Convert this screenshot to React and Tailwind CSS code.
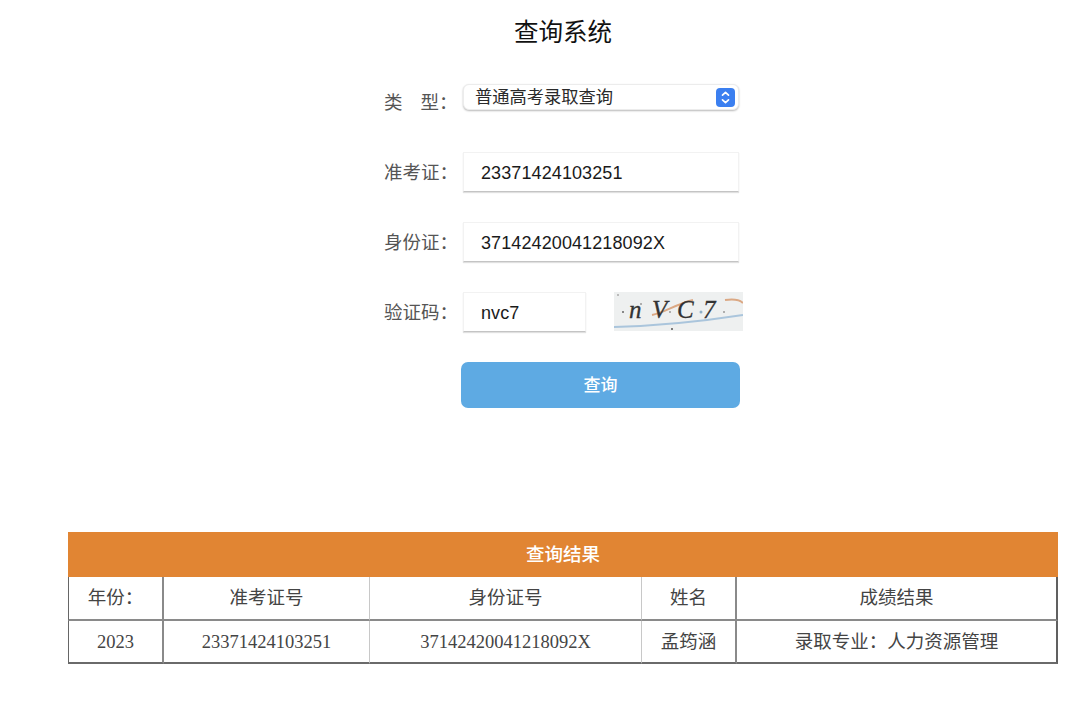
import React from 'react';

const serif = { fontFamily: '"Liberation Serif", "Noto Sans CJK SC", serif' };
const COLON = '\uFF1A';

const FormRow = ({ label, value, narrow, children }) => (
  <div className="flex items-center h-[40px] mb-[30px]">
    <label className="w-[79px] pt-[3px] text-[18.5px] text-[#555] whitespace-nowrap font-['Liberation_Serif','Noto_Sans_CJK_SC',serif]">{label}{COLON}</label>
    <div className={`${narrow ? 'w-[123px]' : 'w-[276px]'} h-[40px] flex items-center pl-[17px] pt-[3px] bg-white border border-[#f2f2f2] border-b-[#c4c4c4] shadow-[0_1px_1px_rgba(0,0,0,0.12)] text-[18px] text-[#1a1a1a] tracking-[0.1px] font-['Liberation_Sans',sans-serif]`}>
      {value}
    </div>
    {children}
  </div>
);

const Captcha = () => (
  <svg className="ml-[28px] self-start" width="129" height="39" viewBox="0 0 129 39">
    <rect x="0" y="0" width="129" height="39" fill="#eef0f0" />
    <path d="M0 35 C40 34 90 29 129 23" stroke="#aac5dc" strokeWidth="2" fill="none" />
    <path d="M38 23 C50 21 62 12 79 8" stroke="#dba884" strokeWidth="2" fill="none" />
    <path d="M111 8 C118 7 125 7 129 11" stroke="#dba884" strokeWidth="2" fill="none" />
    <circle cx="9" cy="20" r="1" fill="#666" />
    <circle cx="4" cy="3" r="1" fill="#aaa" />
    <circle cx="27" cy="12" r="1" fill="#999" />
    <circle cx="56" cy="20" r="1" fill="#999" />
    <circle cx="87" cy="20" r="1.5" fill="#8fb0c8" />
    <circle cx="110" cy="20" r="1" fill="#999" />
    <circle cx="58" cy="37" r="1" fill="#555" />
    <g fontFamily="Liberation Serif, serif" fontStyle="italic" fontSize="25" fill="#333" stroke="#333" strokeWidth="0.3">
      <text x="15" y="26">n</text>
      <text x="38" y="26">V</text>
      <text x="63" y="26">C</text>
      <text x="89" y="26">7</text>
    </g>
  </svg>
);

const cell = 'border-0 border-b-2 border-b-[#8a8a8a] font-normal p-0 pt-[2px]';
const last = 'border-0 border-b-2 border-b-[#6a6a6a] font-normal p-0 pt-[2px]';

const Cells = ({ base, height, values }) => (
  <tr className={height}>
    <td className={`${base} border-l border-l-[#666] border-r-2 border-r-[#8a8a8a]`}>{values[0]}</td>
    <td className={`${base} border-r border-r-[#c8c8c8]`}>{values[1]}</td>
    <td className={`${base} border-r border-r-[#c8c8c8]`}>{values[2]}</td>
    <td className={`${base} border-r-2 border-r-[#8a8a8a]`}>{values[3]}</td>
    <td className={`${base} border-r-2 border-r-[#606060]`}>{values[4]}</td>
  </tr>
);

export default function App() {
  return (
    <div className="w-[1080px] h-[710px] bg-white overflow-hidden font-['Liberation_Sans','Noto_Sans_CJK_SC',sans-serif]">
      <h1 className="pt-[16px] ml-[46px] text-center text-[24.5px] leading-[34px] text-[#111] font-normal">查询系统</h1>

      <div className="ml-[384px] mt-[34px]">
        <div className="flex items-center h-[26px] mb-[42px]">
          <label className="w-[79px] pt-[14px] text-[18.5px] text-[#555] whitespace-nowrap font-['Liberation_Serif','Noto_Sans_CJK_SC',serif]">类<span className="ml-[18px]">型{COLON}</span></label>
          <div className="w-[276px] h-[26px] flex items-center justify-between pl-[11px] pr-[3px] pt-[1px] bg-white rounded-[6px] border border-[#ececec] shadow-[0_1px_2px_rgba(0,0,0,0.28)] text-[17.25px] text-[#2a2a2a]">
            普通高考录取查询
            <span className="w-[19px] h-[19px] rounded-[4px] bg-[#3b7ff0] flex items-center justify-center">
              <svg width="11" height="15" viewBox="0 0 11 15" fill="none" stroke="#fff" strokeWidth="1.7" strokeLinecap="round" strokeLinejoin="round">
                <path d="M2.5 5.2 L5.5 2.4 L8.5 5.2" />
                <path d="M2.5 9.8 L5.5 12.6 L8.5 9.8" />
              </svg>
            </span>
          </div>
        </div>

        <FormRow label="准考证" value="23371424103251" />
        <FormRow label="身份证" value="37142420041218092X" />
        <FormRow label="验证码" value="nvc7" narrow>
          <Captcha />
        </FormRow>

        <button className="block ml-[77px] w-[279px] h-[46px] pt-[1px] rounded-[7px] bg-[#5eaae3] text-white text-[17px] font-medium">查询</button>
      </div>

      <div className="ml-[68px] mt-[124px] w-[990px]">
        <div className="h-[45px] pt-[1px] bg-[#e18533] flex items-center justify-center text-white text-[18.5px] font-medium">查询结果</div>
        <table className="w-[990px] table-fixed border-separate border-spacing-0 text-center text-[18.5px] text-[#444]" style={serif}>
          <colgroup>
            <col className="w-[96px]" />
            <col className="w-[206px]" />
            <col className="w-[272px]" />
            <col className="w-[95px]" />
            <col />
          </colgroup>
          <tbody>
            <Cells base={cell} height="h-[44px]" values={[`年份${COLON}`, '准考证号', '身份证号', '姓名', '成绩结果']} />
            <Cells base={last} height="h-[43px]" values={['2023', '23371424103251', '37142420041218092X', '孟筠涵', `录取专业${COLON}人力资源管理`]} />
          </tbody>
        </table>
      </div>
    </div>
  );
}
